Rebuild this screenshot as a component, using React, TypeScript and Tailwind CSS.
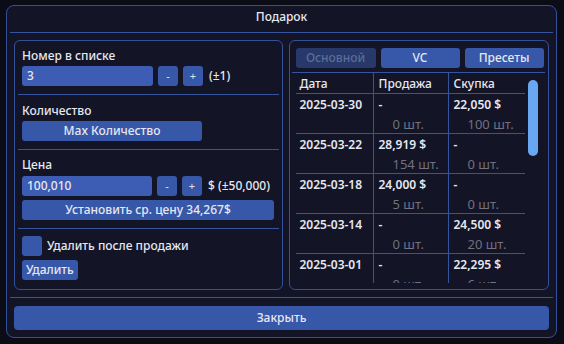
import React from "react";

const rows = [
  { date: "2025-03-30", sell: "-", sellQty: "0 шт.", buy: "22,050 $", buyQty: "100 шт." },
  { date: "2025-03-22", sell: "28,919 $", sellQty: "154 шт.", buy: "-", buyQty: "0 шт." },
  { date: "2025-03-18", sell: "24,000 $", sellQty: "5 шт.", buy: "-", buyQty: "0 шт." },
  { date: "2025-03-14", sell: "-", sellQty: "0 шт.", buy: "24,500 $", buyQty: "20 шт." },
  { date: "2025-03-01", sell: "-", sellQty: "0 шт.", buy: "22,295 $", buyQty: "6 шт." },
];

function Line({ className = "" }: { className?: string }) {
  return <div className={`h-px bg-[#3454a0] ${className}`} />;
}

function SmallBtn({ children }: { children: React.ReactNode }) {
  return (
    <button className="h-[20px] w-[20px] rounded-[3px] bg-[#3757a9] text-[11px] text-[#dfe4f2] flex items-center justify-center">
      {children}
    </button>
  );
}

export default function App() {
  return (
    <div
      className="w-[564px] h-[344px] bg-[#0c0c16] pt-[5px] pl-[6px] text-[12px] text-[#e6e8f0]"
      style={{ fontFamily: '"Noto Sans", "DejaVu Sans", sans-serif' }}
    >
      <div className="w-[551px] h-[333px] rounded-[8px] border border-[#34509a] bg-[#141427] flex flex-col">
        {/* Заголовок */}
        <div className="h-[26px] pt-[2px] text-center leading-[18px] font-medium">Подарок</div>
        <Line className="mx-[3px]" />

        <div className="flex gap-[6px] px-[7px] pt-[7px]">
          {/* Левая карточка */}
          <div className="w-[269px] h-[250px] rounded-[6px] border border-[#34509a] flex flex-col">
            <div className="px-[7px] pt-[7px] pb-[8px]">
              <div className="h-[16px] leading-[16px] font-medium">Номер в списке</div>
              <div className="mt-[2px] flex items-center gap-[5px]">
                <div className="w-[131px] h-[20px] rounded-[3px] bg-[#3c5db3] px-[5px] leading-[20px] font-medium">3</div>
                <SmallBtn>-</SmallBtn>
                <SmallBtn>+</SmallBtn>
                <span className="ml-[1px] font-medium">(±1)</span>
              </div>
            </div>
            <Line className="mx-[3px]" />
            <div className="px-[7px] pt-[8px] pb-[8px]">
              <div className="h-[16px] leading-[16px] font-medium">Количество</div>
              <button className="mt-[2px] w-[180px] h-[20px] rounded-[3px] bg-[#3757a9] font-medium">
                Max Количество
              </button>
            </div>
            <Line className="mx-[3px]" />
            <div className="px-[7px] pt-[7px] pb-[8px]">
              <div className="h-[16px] leading-[16px] font-medium">Цена</div>
              <div className="mt-[3px] flex items-center gap-[5px]">
                <div className="w-[130px] h-[20px] rounded-[3px] bg-[#3c5db3] px-[5px] leading-[20px] font-medium">100,010</div>
                <SmallBtn>-</SmallBtn>
                <SmallBtn>+</SmallBtn>
                <span className="ml-[1px] font-medium">$ (±50,000)</span>
              </div>
              <button className="mt-[4px] w-[252px] h-[20px] rounded-[3px] bg-[#3757a9] font-medium">
                Установить ср. цену 34,267$
              </button>
            </div>
            <Line className="mx-[3px]" />
            <div className="px-[7px] pt-[7px]">
              <div className="flex items-center gap-[5px]">
                <div className="w-[20px] h-[20px] rounded-[3px] bg-[#3757a9]" />
                <span className="font-medium">Удалить после продажи</span>
              </div>
              <button className="mt-[4px] h-[20px] px-[4px] rounded-[3px] bg-[#3757a9] font-medium">Удалить</button>
            </div>
          </div>

          {/* Правая карточка */}
          <div className="w-[261px] h-[250px] rounded-[6px] border border-[#34509a] flex flex-col overflow-hidden">
            <div className="flex gap-[5px] pl-[6px] pt-[7px]">
              <button className="w-[80px] h-[20px] rounded-[3px] bg-[#27386b] text-[#5d6d94] font-medium">Основной</button>
              <button className="w-[79px] h-[20px] rounded-[3px] bg-[#3757a9] font-medium">VC</button>
              <button className="w-[79px] h-[20px] rounded-[3px] bg-[#3757a9] font-medium">Пресеты</button>
            </div>
            <Line className="mt-[4px] ml-[2px] mr-[3px]" />
            <div className="relative flex-1 overflow-hidden pl-[6px] mb-[6px]">
              <div className="w-[229px]">
                <div className="grid grid-cols-[77px_75px_77px] h-[21px] border-b border-[#3454a0] font-medium">
                  <div className="pl-[4px] leading-[21px]">Дата</div>
                  <div className="pl-[5px] leading-[21px] border-l border-[#3454a0]">Продажа</div>
                  <div className="pl-[5px] leading-[21px] border-l border-[#3454a0]">Скупка</div>
                </div>
                {rows.map((r) => (
                  <div key={r.date} className="grid grid-cols-[77px_75px_77px] h-[40px] border-b border-[#3454a0] font-semibold">
                    <div className="pl-[4px] pt-[3px] leading-[16px]">{r.date}</div>
                    <div className="pl-[5px] pt-[3px] border-l border-[#3454a0]">
                      <div className="leading-[16px]">{r.sell}</div>
                      <div className="pl-[14px] mt-[3px] leading-[16px] text-[13px] font-normal text-[#71717f]">{r.sellQty}</div>
                    </div>
                    <div className="pl-[5px] pt-[3px] border-l border-[#3454a0]">
                      <div className="leading-[16px]">{r.buy}</div>
                      <div className="pl-[14px] mt-[3px] leading-[16px] text-[13px] font-normal text-[#71717f]">{r.buyQty}</div>
                    </div>
                  </div>
                ))}
              </div>
              <div className="absolute left-[238px] top-[7px] w-[10px] h-[76px] rounded-full bg-[#6aa7f2]" />
            </div>
          </div>
        </div>

        <Line className="mx-[3px] mt-[7px]" />
        <button className="mx-[7px] mt-[8px] h-[24px] rounded-[4px] bg-[#3757a9] font-medium">Закрыть</button>
      </div>
    </div>
  );
}
